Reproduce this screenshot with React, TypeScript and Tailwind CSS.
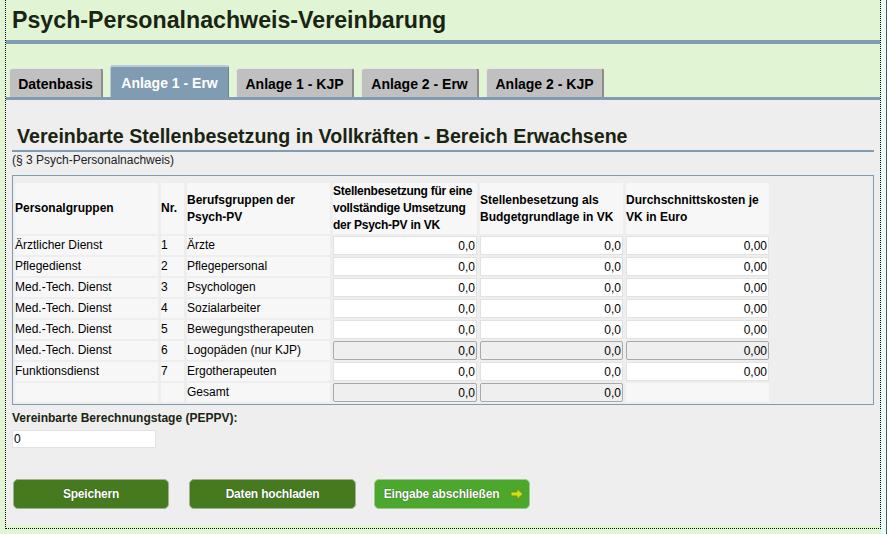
const tabs = [
  { label: "Datenbasis", w: "w-[94px]" },
  { label: "Anlage 1 - Erw", w: "w-[119px]", active: true },
  { label: "Anlage 1 - KJP", w: "w-[118px]" },
  { label: "Anlage 2 - Erw", w: "w-[118px]" },
  { label: "Anlage 2 - KJP", w: "w-[118px]" },
];

const rows = [
  { gruppe: "Ärztlicher Dienst", nr: "1", beruf: "Ärzte" },
  { gruppe: "Pflegedienst", nr: "2", beruf: "Pflegepersonal" },
  { gruppe: "Med.-Tech. Dienst", nr: "3", beruf: "Psychologen" },
  { gruppe: "Med.-Tech. Dienst", nr: "4", beruf: "Sozialarbeiter" },
  { gruppe: "Med.-Tech. Dienst", nr: "5", beruf: "Bewegungstherapeuten" },
  { gruppe: "Med.-Tech. Dienst", nr: "6", beruf: "Logopäden (nur KJP)", disabled: true },
  { gruppe: "Funktionsdienst", nr: "7", beruf: "Ergotherapeuten" },
];

function NumInput({ value, disabled }: { value: string; disabled?: boolean }) {
  return (
    <input
      readOnly
      value={value}
      className={
        disabled
          ? "h-[19px] w-full rounded-[2px] border border-[#a9a9a9] bg-[#efefef] pr-[1px] text-right text-[12px] text-black outline-none"
          : "h-[19px] w-full border border-[#e2e2e2] bg-white pr-[1px] text-right text-[12px] text-black outline-none"
      }
    />
  );
}

function Cell({ children, bold, tight }: { children?: React.ReactNode; bold?: boolean; tight?: boolean }) {
  return (
    <div
      className={
        "flex items-center bg-[#f7f7f7] text-[12px] leading-[17px] text-black " +
        (bold ? "font-bold " : "") +
        (tight ? "tracking-[-0.25px]" : "")
      }
    >
      {children}
    </div>
  );
}

function Arrow() {
  return (
    <svg width="14" height="12" viewBox="0 0 14 12">
      <polygon
        points="1,4 7,4 7,0.8 13,6 7,11.2 7,8 1,8"
        fill="#c9e21c"
        stroke="#7d8f12"
        strokeWidth="1"
        strokeLinejoin="round"
      />
    </svg>
  );
}

export default function App() {
  return (
    <div className="flex h-[534px] w-[887px] bg-[#e1f5d5] font-['Liberation_Sans',Arial,sans-serif]">
      <div className="w-[881px]">
        <div className="ml-[5px] h-[529px] border-x border-b border-dotted border-black">
          {/* kopf */}
          <h1 className="pl-[6px] text-[23.2px] leading-[40px] font-bold text-[#1a2412]">
            Psych-Personalnachweis-Vereinbarung
          </h1>
          <div className="h-[4px] bg-[#7f9cb3]" />

          <div className="flex h-[53px] items-end gap-[7px] pl-[3px]">
            {tabs.map((t) =>
              t.active ? (
                <div
                  key={t.label}
                  className={`${t.w} flex h-[32px] items-center justify-center pt-[3px] rounded-t-[3px] border-t-2 border-l border-r border-t-[#b9cbd8] border-l-[#b9cbd8] border-r-[#6a8396] bg-[#7f9cb3] text-[14px] font-bold text-white`}
                >
                  {t.label}
                </div>
              ) : (
                <div
                  key={t.label}
                  className={`${t.w} flex h-[29px] items-center justify-center pt-[2px] rounded-t-[3px] border-t border-l border-r-2 border-t-[#e6e6e6] border-l-[#e6e6e6] border-r-[#8c8c8c] bg-[#c0c0c0] text-[14px] font-bold text-black`}
                >
                  {t.label}
                </div>
              ),
            )}
          </div>
          <div className="h-[3px] bg-[#7f9cb3]" />

          {/* inhalt */}
          <div className="h-[425px] bg-[#eeeeee] px-[6px] pt-[23px]">
            <h2 className="border-b-2 border-[#7f9cb3] pl-[5px] text-[19.6px] leading-[27px] font-bold text-[#1a2412]">
              Vereinbarte Stellenbesetzung in Vollkräften - Bereich Erwachsene
            </h2>
            <p className="text-[12px] leading-[16px] text-[#222]">(§ 3 Psych-Personalnachweis)</p>

            <div className="mt-[7px] border border-[#7f9cb3] px-[2px] pt-[7px] pb-[2px]">
              <div className="grid grid-cols-[143px_23px_143px_144px_143px_143px] grid-rows-[51px] auto-rows-[19px] gap-x-[3px] gap-y-[2px]">
                <Cell bold>Personalgruppen</Cell>
                <Cell bold>Nr.</Cell>
                <Cell bold>
                  Berufsgruppen der
                  <br />
                  Psych-PV
                </Cell>
                <Cell bold tight>
                  Stellenbesetzung für eine vollständige Umsetzung der Psych-PV in VK
                </Cell>
                <Cell bold>Stellenbesetzung als Budgetgrundlage in VK</Cell>
                <Cell bold>Durchschnittskosten je VK in Euro</Cell>

                {rows.map((r) => (
                  <div key={r.nr} className="contents">
                    <Cell>{r.gruppe}</Cell>
                    <Cell>{r.nr}</Cell>
                    <Cell>{r.beruf}</Cell>
                    <NumInput value="0,0" disabled={r.disabled} />
                    <NumInput value="0,0" disabled={r.disabled} />
                    <NumInput value="0,00" disabled={r.disabled} />
                  </div>
                ))}

                <Cell />
                <Cell />
                <Cell>Gesamt</Cell>
                <NumInput value="0,0" disabled />
                <NumInput value="0,0" disabled />
                <div className="bg-[#f7f7f7]" />
              </div>
            </div>

            <div className="mt-[5px] text-[12px] leading-[16px] font-bold text-[#1a2412]">
              Vereinbarte Berechnungstage (PEPPV):
            </div>
            <input
              readOnly
              value="0"
              className="mt-[1px] h-[18px] w-[144px] border border-[#e2e2e2] bg-white pl-[1px] text-[12px] text-black outline-none"
            />

            <div className="mt-[29px] flex pl-[1px]">
              <button className="h-[30px] w-[156px] rounded-[5px] border border-[#9fae94] bg-[#457a1f] text-[12px] font-bold tracking-[-0.2px] text-white [text-shadow:0_0_1px_#1d3a0a]">
                Speichern
              </button>
              <button className="ml-[20px] h-[30px] w-[167px] rounded-[5px] border border-[#9fae94] bg-[#457a1f] text-[12px] font-bold tracking-[-0.2px] text-white [text-shadow:0_0_1px_#1d3a0a]">
                Daten hochladen
              </button>
              <button className="ml-[18px] flex h-[30px] w-[156px] items-center justify-center gap-[11px] rounded-[5px] border border-[#9fc794] bg-[#4ca82c] pl-[4px] text-[12px] font-bold tracking-[-0.2px] text-white [text-shadow:0_0_1px_#1d3a0a]">
                Eingabe abschließen
                <Arrow />
              </button>
            </div>
          </div>
        </div>
      </div>
      <div className="h-full w-[6px] border-r border-[#4a5a5a] bg-[#e8fcfc]" />
    </div>
  );
}
